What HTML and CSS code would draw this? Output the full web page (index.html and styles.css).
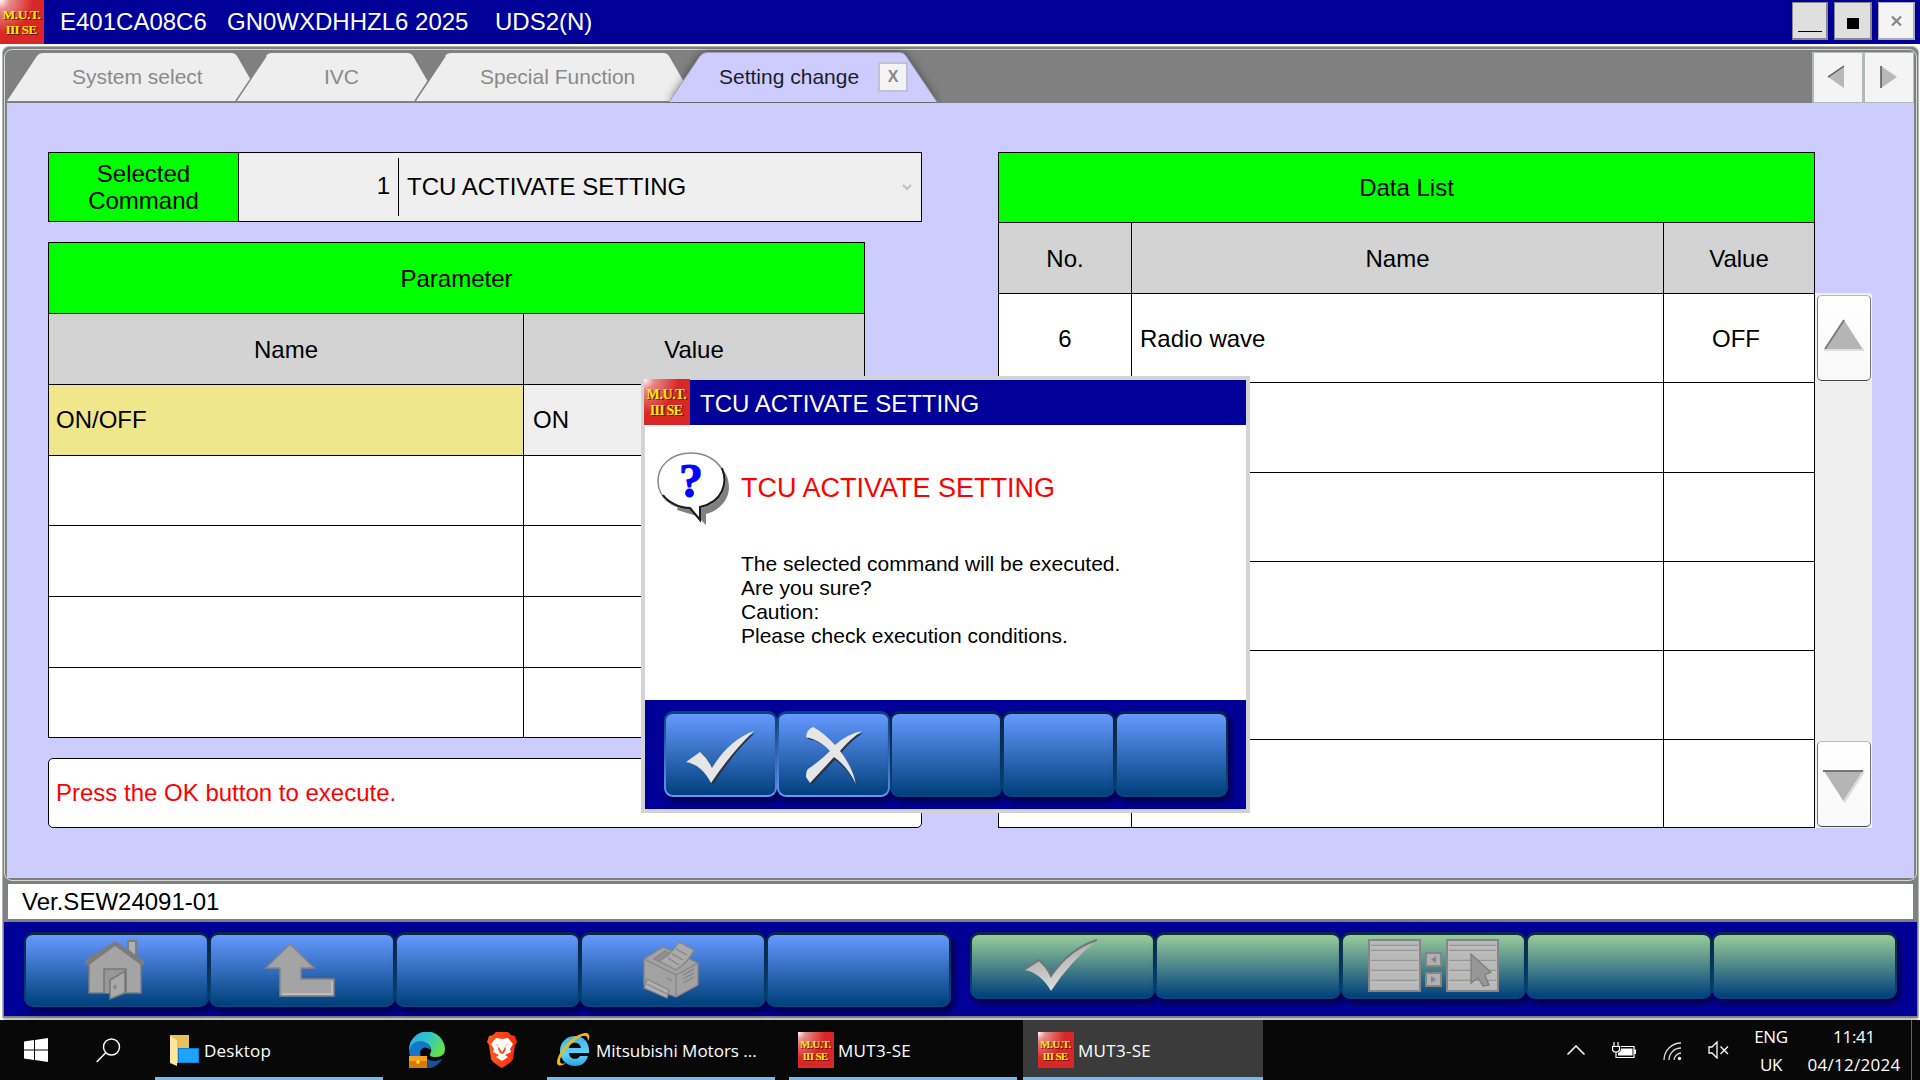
FILE: index.html
```html
<!DOCTYPE html>
<html lang="en">
<head>
<meta charset="utf-8">
<title>MUT3-SE</title>
<link rel="stylesheet" href="styles.css">
</head>
<body>
<svg class="defs" width="0" height="0" aria-hidden="true">
  <defs>
    <radialGradient id="gloss" cx="0" cy="0" r="0.75"><stop offset="0" stop-color="#fff"/><stop offset=".3" stop-color="#e98a8a"/><stop offset="1" stop-color="#d92626"/></radialGradient>
    <linearGradient id="silver" x1="0" y1="0" x2="0.4" y2="1"><stop offset="0" stop-color="#777"/><stop offset=".4" stop-color="#b4b4b4"/><stop offset="1" stop-color="#ddd"/></linearGradient>
    <linearGradient id="edgeA" x1="0" y1="0" x2="1" y2=".5"><stop offset="0" stop-color="#2aa7e8"/><stop offset=".5" stop-color="#2fc4cf"/><stop offset="1" stop-color="#62e04b"/></linearGradient>
    <linearGradient id="ieA" x1="0" y1="0" x2="0" y2="1"><stop offset="0" stop-color="#3fb4ea"/><stop offset=".6" stop-color="#5fd4fb"/><stop offset="1" stop-color="#2ba3e0"/></linearGradient>
    <linearGradient id="braveA" x1="0" y1="0" x2="1" y2="0"><stop offset="0" stop-color="#ff5a1c"/><stop offset="1" stop-color="#fb2a0c"/></linearGradient>
    <symbol id="mut" viewBox="0 0 36 36">
      <rect width="36" height="36" fill="url(#gloss)"/>
      <g font-family="Liberation Serif, serif" font-weight="bold" font-size="11">
        <g fill="#6b1010"><text x="3" y="16.500" textLength="31.500">M.U.T.</text><text x="5.500" y="29" textLength="26">III SE</text></g>
        <g fill="#ffec00"><text x="2" y="15.500" textLength="31.500">M.U.T.</text><text x="4.500" y="28" textLength="26">III SE</text></g>
      </g>
    </symbol>
    <symbol id="list" viewBox="0 0 54 54">
      <rect x="1" y="1" width="51" height="51" fill="#b9b9b9" stroke="#868686" stroke-width="2"/>
      <path d="M3 6.500H50M3 11.500H50M3 21.500H50M3 31.500H50M3 41.500H50" stroke="#979797" stroke-width="1.500"/>
      <path d="M3 8H50M3 13H50M3 23H50M3 33H50M3 43H50" stroke="#c6c6c6"/>
    </symbol>
  </defs>
</svg>

<header class="titlebar">
  <svg class="titlebar-logo"><use href="#mut"/></svg>
  <div class="titlebar-text"><span class="t1">E401CA08C6</span><span class="t2">GN0WXDHHZL6 2025</span><span>UDS2(N)</span></div>
  <div class="winbtns">
    <div class="winbtn w-min"><i class="dash"></i></div>
    <div class="winbtn w-max"><i class="square"></i></div>
    <div class="winbtn w-close"><svg width="11" height="10"><path d="M1 0.500L10 9.500M10 0.500L1 9.500" stroke="#868686" stroke-width="2.200"/></svg></div>
  </div>
</header>

<main class="frame">
  <section class="panel">
    <nav class="tabs">
      <div class="tab tab1"><svg width="256" height="51"><path d="M0 49L30 4Q32 1 36 1H224Q228 1 230 4L256 49Z" fill="#eee"/></svg><span>System select</span></div>
      <div class="tab tab2"><svg width="203" height="51"><path d="M0 49L30 4Q32 1 36 1H171Q175 1 177 4L203 49Z" fill="#eee"/><path d="M0 49L30 4" stroke="#808080" stroke-width="1.500"/></svg><span>IVC</span></div>
      <div class="tab tab3"><svg width="280" height="51"><path d="M0 49L30 4Q32 1 36 1H248Q252 1 254 4L280 49Z" fill="#eee"/><path d="M0 49L30 4" stroke="#808080" stroke-width="1.500"/></svg><span>Special Function</span></div>
      <div class="tab tab4"><svg width="268" height="51"><path d="M0 50L31 4Q34 0.500 38 0.500H231Q235 0.500 237 4L268 50Z" fill="#ccf"/><path d="M0 50L31 4Q34 0.500 38 0.500H231Q235 0.500 237 4L268 50" fill="none" stroke="#9b9bb8"/></svg><span>Setting change</span><b class="tab-x">X</b></div>
      <div class="tabnav">
        <div class="tabnav-btn prev"><svg width="18" height="24"><path d="M17 1V23L1 12Z" fill="#b8b8b8"/><path d="M17 1L1 12" stroke="#555" stroke-width="1.500"/></svg></div>
        <div class="tabnav-btn"><svg width="18" height="24"><path d="M1 1V23L17 12Z" fill="#b8b8b8"/><path d="M1 1V23" stroke="#555" stroke-width="1.500"/></svg></div>
      </div>
    </nav>
    <div class="content">
      <div class="left">
        <div class="command">
          <div class="command-label">Selected<br>Command</div>
          <div class="command-no">1</div>
          <div class="command-name">TCU ACTIVATE SETTING</div>
          <svg class="command-arrow" width="10" height="7"><path d="M1 1L5 5L9 1" fill="none" stroke="#bbb" stroke-width="1.800"/></svg>
        </div>
        <div class="grid param">
          <div class="green wide">Parameter</div>
          <div class="head">Name</div><div class="head">Value</div>
          <div class="name selected">ON/OFF</div><div class="name input">ON</div>
          <div></div><div></div><div></div><div></div>
          <div></div><div></div><div></div><div></div>
        </div>
        <div class="message">Press the OK button to execute.</div>
      </div>
      <div class="grid data">
        <div class="green wide">Data List</div>
        <div class="head">No.</div><div class="head">Name</div><div class="head">Value</div>
        <div class="mid">6</div><div class="name radio">Radio wave</div><div class="mid off">OFF</div>
        <div></div><div></div><div></div><div></div><div></div><div></div>
        <div></div><div></div><div></div><div></div><div></div><div></div>
        <div></div><div></div><div></div>
      </div>
      <div class="scroll">
        <div class="scroll-btn"><svg width="42" height="33"><path d="M21 1L41 32H1Z" fill="#b5b5b5"/><path d="M21 1L2 30" stroke="#777" stroke-width="1.800"/><path d="M1 31H41" stroke="#ddd" stroke-width="2"/></svg></div>
        <div class="scroll-btn low"><svg width="42" height="33"><path d="M1 1H41L21 32Z" fill="#b5b5b5"/><path d="M41 1L21 32" stroke="#ddd" stroke-width="2.500"/><path d="M0 1H40" stroke="#777" stroke-width="2"/></svg></div>
      </div>
    </div>
  </section>
  <div class="version">Ver.SEW24091-01</div>
  <footer class="footer">
    <div class="keys keys-blue">
      <div class="key"><svg class="nudge" width="62" height="62" viewBox="0 0 62 62"><path d="M44 2H52V18L44 11Z" fill="#b0b0b0" stroke="#7c7c7c" stroke-width="1.800"/><path d="M5 23L31 5L57 23V54H5Z" fill="#a4a4a4" stroke="#7c7c7c" stroke-width="1.500"/><path d="M1 25V21L31 2L60 22V26L57 26L31 7L5 26Z" fill="#7c7c7c"/><path d="M20 54V30H42V54" fill="#989898" stroke="#777" stroke-width="1.500"/><path d="M26 60V41L41 32V54Z" fill="#a9a9a9" stroke="#777" stroke-width="1.500"/><path d="M31 45L33 48L31 51L29 48Z" fill="#888"/></svg></div>
      <div class="key"><svg class="nudge" width="70" height="56" viewBox="0 0 70 56"><path d="M25 2L49 26H36V37H69V54H15V26H1Z" fill="#a4a4a4" stroke="#858585" stroke-width="1.500"/><path d="M67 39V52H17" fill="none" stroke="#bdbdbd" stroke-width="2"/></svg></div>
      <div class="key"></div>
      <div class="key"><svg class="nudge" width="56" height="58" viewBox="0 0 56 58" stroke="#858585" stroke-width="1.300" stroke-linejoin="round"><path d="M1 18L20 6L55 22V44L33 56L1 44Z" fill="#a2a2a2"/><path d="M1 18L33 34L55 22M33 34V56" fill="none"/><path d="M11 18L22 10L44 20L33 28Z" fill="#909090"/><path d="M16 20Q28 14 36 1L51 9Q46 20 33 29Z" fill="#aaa"/><path d="M33 8L44 14M29 13L40 19M25 17L36 24" fill="none"/><path d="M4 38L26 49L24 57L1 47Z" fill="#b0b0b0"/><path d="M4 43L24 53M40 34L51 28M40 38L51 32M40 42L51 36M24 37L29 40" fill="none"/></svg></div>
      <div class="key"></div>
    </div>
    <div class="keys keys-green">
      <div class="key"><svg class="check-f" width="76" height="54" viewBox="0 0 76 54"><path d="M1 31L16 21Q24 28 28 37Q46 10 74 1Q46 24 28 52Q17 33 1 31Z" fill="url(#silver)"/><path d="M1 31L16 21Q24 28 28 37Q46 10 74 1" fill="none" stroke="#6f7774" stroke-width="2"/></svg></div>
      <div class="key"></div>
      <div class="key"><svg width="132" height="54" viewBox="0 0 132 54"><use href="#list" width="54" height="54"/><use href="#list" x="78" width="54" height="54"/><g fill="#b0b0b0" stroke="#858585" stroke-width="2"><path d="M58 14H73V27H58ZM58 34H73V47H58Z"/></g><path d="M68 17V24L63 20.500ZM63 37V44L68 40.500Z" fill="#858585"/><path d="M103 15V44L110 39L115 47L121 46L117 36L123 33Z" fill="#969696" stroke="#7c7c7c" stroke-width="1.200"/></svg></div>
      <div class="key"></div>
      <div class="key"></div>
    </div>
  </footer>
</main>

<aside class="dialog">
  <div class="dialog-title"><svg class="dialog-logo"><use href="#mut"/></svg><span>TCU ACTIVATE SETTING</span></div>
  <div class="dialog-body">
    <svg class="ask" width="74" height="74" viewBox="0 0 74 74"><path d="M36 4C55 4 72 16 72 35C72 49 61 59 49 62L49 73L40 64L20 58Z" fill="#808080"/><path d="M34 1C53 1 68 13 68 30C68 45 58 53 43 57V68L34 57C14 56 1 45 1 29C1 13 15 1 34 1Z" fill="#fff" stroke="#888" stroke-width="1.500"/><path d="M65 16C71 31 66 50 43 55V68L33 56C22 56 11 50 6 43" fill="none" stroke="#1a1a1a" stroke-width="2"/><text x="34" y="45" text-anchor="middle" font-family="Liberation Serif, serif" font-weight="bold" font-size="48" fill="#00f" stroke="#00f">?</text></svg>
    <div class="dialog-text">
      <h1>TCU ACTIVATE SETTING</h1>
      <p>The selected command will be executed.<br>Are you sure?<br>Caution:<br>Please check execution conditions.</p>
    </div>
  </div>
  <div class="dialog-keys">
    <div class="key on"><svg class="check-d" width="70" height="58" viewBox="0 0 70 58"><path d="M3 34L17 25Q24 31 28 40Q46 13 70 4Q48 24 28 56Q18 36 3 34Z" fill="#26364a"/><path d="M1 33L15 23Q23 30 27 39Q44 11 69 2Q46 24 26 54Q17 36 1 33Z" fill="#e6e6e6"/></svg></div>
    <div class="key on"><svg class="cross-d" width="60" height="62" viewBox="0 0 60 62"><path d="M5 3Q18 9 31 22Q42 10 58 7Q46 15 36 27Q47 42 53 61Q42 42 30 34Q18 46 7 59L3 54Q3 46 6 45Q18 36 26 26Q16 15 3 13Z" fill="#26364a"/><path d="M8 1Q18 6 30 19Q42 8 57 5Q45 13 35 25Q47 40 51 58Q42 40 29 31Q18 43 5 57L1 51Q1 45 3 43Q15 35 25 25Q15 14 1 11Q2 3 8 1Z" fill="#e6e6e6"/></svg></div>
    <div class="key"></div><div class="key"></div><div class="key"></div>
  </div>
</aside>

<div class="taskbar">
  <div class="tb-start"><svg width="24" height="24"><path d="M0 3.500L10 2V11.500H0ZM11 1.900L24 0V11.500H11ZM0 12.500H10V22L0 20.500ZM11 12.500H24V24L11 22.100Z" fill="#fff"/></svg></div>
  <div class="tb-search"><svg width="25" height="25"><circle cx="15.500" cy="9" r="8" fill="none" stroke="#fff" stroke-width="1.400"/><path d="M9.700 14.800L0.700 24" stroke="#fff" stroke-width="1.500"/></svg></div>
  <div class="tb-app open app-desktop"><svg width="29" height="31"><path d="M0 0H19V28H0Z" fill="#e9bf5a"/><path d="M0 1L7 5V31L0 28Z" fill="#ffe69c"/><path d="M8 13H29V28H8Z" fill="#0a7fd6"/><path d="M9 14H28V27H9Z" fill="#1fa3fb"/></svg><span>Desktop</span></div>
  <div class="tb-app app-edge"><svg width="36" height="36" viewBox="0 0 36 36"><path d="M0 18A18 18 0 0 1 36 17Q36 25 27 25Q20 25 21 22Q24 18 20 13Q12 6 0 18Z" fill="url(#edgeA)"/><path d="M0 18Q3 9 12 9Q21 10 22 18Q14 12 11 20Q11 28 20 31Q27 32 33 27Q27 36 17 36Q1 35 0 18Z" fill="#1477c9"/><path d="M18 27Q25 31 33 27Q28 36 18 36Z" fill="#174f9c"/><rect y="24" width="18" height="12" fill="#d97a06"/><rect y="24" width="18" height="5" fill="#f6a21a"/><rect x="7.500" y="28.500" width="3" height="3" fill="#ffe060"/></svg></div>
  <div class="tb-app app-brave"><svg width="30" height="36" viewBox="0 0 30 36"><path d="M9 0H21L24 3L28 4L30 10L28 13L26 27Q24 31 15 36Q6 31 4 27L2 13L0 10L2 4L6 3Z" fill="url(#braveA)"/><path d="M9 6L15 7L21 6L26 12L23 17L24 20L18 23L21 25L15 29L9 25L12 23L6 20L7 17L4 12Z" fill="#fff"/><path d="M7 12L12 14L11 17L13 21L15 22L17 21L19 17L18 14L23 12L19 13L17 17L15 20L13 17L11 13Z" fill="#fb4a1a"/></svg></div>
  <div class="tb-app open app-ie"><svg width="34" height="36" viewBox="0 0 34 36"><path fill-rule="evenodd" d="M19 4C28 4 34 11 33 21H13C13 27 21 29 24 24H32C30 31 25 34 19 34C10 34 4 27 4 19C4 10 11 4 19 4ZM13 16H25C24 9 14 9 13 16Z" fill="url(#ieA)"/><path d="M6 33C-2 36 0 25 9 14C18 3 31 -2 33 3Q34 6 32 9Q32 3 27 4C20 5 3 22 4 30Q5 33 10 31Q8 33 6 33Z" fill="#f2b914"/></svg><span>Mitsubishi Motors ...</span></div>
  <div class="tb-app open app-mut"><svg width="36" height="36"><use href="#mut"/></svg><span>MUT3-SE</span></div>
  <div class="tb-app open active app-mut2"><svg width="36" height="36"><use href="#mut"/></svg><span>MUT3-SE</span></div>
  <div class="tray">
    <svg width="18" height="10"><path d="M0.500 9.500L9 1L17.500 9.500" fill="none" stroke="#fff" stroke-width="1.500"/></svg>
    <svg class="tr-bat" width="24" height="17"><path d="M2 0V4M6 0V4M0.500 4.500H7.500V8Q7 10 4 10Q1 10 0.500 8ZM4 10V15.500H22V4.500H9" fill="none" stroke="#fff" stroke-width="1.200"/><path d="M9 6.500H20.500V13.500H6V11Q9 10 9 6.500ZM22 7.500H24V12H22Z" fill="#fff"/></svg>
    <svg class="tr-wifi" width="19" height="19"><g fill="none" stroke="#ddd" stroke-width="1.300"><path d="M1 18A17 17 0 0 1 18 1M6 18A12 12 0 0 1 18 6M11 18A7.500 7.500 0 0 1 18 11"/></g><circle cx="16.500" cy="16.500" r="1.700" fill="#fff"/></svg>
    <svg class="tr-snd" width="21" height="18"><path d="M1 6H4L9 1V17L4 12H1ZM12.500 5.500L20 13M20 5.500L12.500 13" fill="none" stroke="#fff" stroke-width="1.300"/></svg>
    <div class="lang">ENG<br>UK</div>
    <div class="clock">11:41<br><span>04/12/2024</span></div>
    <i class="peek"></i>
  </div>
</div>
</body>
</html>
```
FILE: styles.css
```css
* { box-sizing: border-box; }
body {
  margin: 0;
  width: 1920px;
  height: 1080px;
  overflow: hidden;
  display: flex;
  flex-direction: column;
  background: #fff;
  color: #000;
  font: 24px/27px "Liberation Sans", Arial, sans-serif;
  position: relative;
}
svg { display: block; flex: none; }
.defs { position: absolute; }

/* Title bar */
.titlebar { height: 44px; flex: none; display: flex; background: #000099; color: #fff; }
.titlebar-logo { width: 44px; height: 44px; }
.titlebar-text { flex: 1; padding: 8px 0 0 16px; white-space: nowrap; }
.titlebar-text span { display: inline-block; }
.t1 { width: 167px; }
.t2 { width: 268px; }
.winbtns { display: flex; padding: 2px 5px 0 0; }
.winbtn { height: 38px; border: 1px solid #888; border-width: 1px 2px 2px 1px; background: #dfdfdf; display: flex; align-items: center; justify-content: center; }
.w-min { width: 36px; margin-right: 6px; }
.w-max { width: 38px; margin-right: 6px; }
.w-close { width: 37px; background: #f4f4f4; border-color: #aab; }
.dash { width: 24px; height: 1px; background: #000; margin-top: 22px; }
.square { width: 12px; height: 11px; background: #000; margin-top: 6px; }

/* Application frame */
.frame {
  flex: none;
  height: 974px;
  margin: 2px 1px 0 2px;
  display: flex;
  flex-direction: column;
  background: #808080;
  border: 1px solid #b4b8b4;
  border-bottom: 2px solid #c4c8c4;
  border-radius: 7px 7px 4px 4px;
}
.panel { height: 832px; margin: 2px 1px 0; padding: 2px; border: 1px solid #d4d8d4; border-radius: 8px; }
.tabs { height: 51px; display: flex; background: #808080; }
.tab { position: relative; height: 51px; color: #8a8a8a; font-size: 21px; line-height: 50px; flex: none; }
.tab svg { position: absolute; left: 0; top: 0; overflow: visible; }
.tab span { position: relative; white-space: nowrap; }
.tab1 { width: 256px; padding-left: 65px; }
.tab2 { width: 203px; padding-left: 88px; margin-left: -27px; }
.tab3 { width: 280px; padding-left: 65px; margin-left: -24px; }
.tab4 { width: 268px; padding-left: 50px; margin-left: -26px; color: #1c1c2c; display: flex; }
.tab4 svg { filter: drop-shadow(0 0 4px rgba(0, 0, 0, .45)); clip-path: inset(-4px -14px 0 -14px); }
.tab-x { position: relative; width: 30px; height: 30px; margin: 10px 0 0 19px; border: 2px solid #bfc0d2; background: #f3f3f3; color: #888; font: bold 16px/25px "Liberation Sans", Arial, sans-serif; text-align: center; }
.tabnav { margin-left: auto; display: flex; }
.tabnav-btn { width: 51px; height: 51px; display: flex; align-items: center; justify-content: center; background: #f4f4f4; border: 2px solid #b4b8b8; border-width: 1px 1px 1px 2px; padding-bottom: 2px; }
.tabnav-btn.prev { padding-right: 4px; }

.content { height: 775px; background: #ccccff; display: flex; padding: 49px 0 0 41px; }
.left { width: 874px; margin-right: 76px; }
.command { height: 70px; display: flex; align-items: center; border: 1px solid #000; background: #efefef; }
.command-label { width: 190px; height: 68px; padding-top: 7px; text-align: center; background: #0f0; border-right: 1px solid #000; }
.command-no { width: 160px; height: 58px; line-height: 56px; padding-right: 8px; text-align: right; border-right: 1px solid #000; }
.command-name { flex: 1; padding: 0 0 1px 8px; }
.command-arrow { margin-right: 9px; }
.grid { display: grid; gap: 1px; padding: 1px; background: #000; align-content: start; }
.grid > div { background: #fff; display: flex; align-items: center; }
.grid > .wide { grid-column: 1 / -1; }
.grid > .green, .grid > .head, .grid > .mid { justify-content: center; }
.grid > .green { background: #0f0; }
.grid > .head { background: #d3d3d3; }
.grid > .name { padding: 0 7px 2px; }
.grid > .radio { padding: 0 8px; }
.grid > .off { padding-right: 6px; }
.grid > .selected { background: #f0e68c; }
.grid > .input { background: #efefef; padding-left: 9px; }
.param { width: 817px; margin-top: 20px; grid-template-columns: 474px 340px; grid-template-rows: 70px 70px 70px 69px 70px 70px 69px; }
.message { margin-top: 20px; height: 70px; padding: 20px 0 0 7px; border: 1px solid #000; border-radius: 5px; background: #fff; color: #f00; }
.data { width: 817px; height: 676px; grid-template-columns: 132px 531px 150px; grid-template-rows: 69px 70px 88px 89px 88px 88px 88px 87px; }
.scroll { width: 57px; height: 535px; margin-top: 141px; padding: 2px 1px 1px 2px; background: #efefef; display: flex; flex-direction: column; justify-content: space-between; border-radius: 0 3px 0 0; }
.scroll-btn { height: 86px; border: 1px solid #999; border-color: #bbb #777 #444; border-radius: 5px; background: linear-gradient(#fff, #f8f8f8); display: flex; justify-content: center; padding-top: 23px; }
.scroll-btn.low { padding-top: 28px; }

.version { height: 35px; margin: 3px 5px; padding: 4px 0 0 14px; background: #fff; }

/* Function keys */
.footer { height: 94px; margin: 0 1px; display: flex; background: #000099; padding: 10px 0 0 20px; }
.keys { width: 927px; height: 75px; display: flex; }
.keys-green { height: 67px; margin-left: 19px; }
.key {
  flex: 1 1 0;
  display: flex;
  align-items: center;
  justify-content: center;
  border: 2px solid transparent;
  border-top-width: 3px;
  border-radius: 9px;
  background: linear-gradient(#6699ff, #00407c) padding-box, linear-gradient(#0b2440, #083a66 60%, #05467e) border-box;
  box-shadow: 3px 5px 6px rgba(0, 0, 40, .75);
}
.keys-green .key { background: linear-gradient(#99cc99, #00407c) padding-box, linear-gradient(#0b2a40, #083a66 60%, #05467e) border-box; }
.key.on { background: linear-gradient(#6699ff, #00407c) padding-box, linear-gradient(#08407c, #6699ff) border-box; }
.nudge { margin-right: 4px; }
.check-f { margin-right: 3px; }

/* Confirmation dialog, floating above the screen */
.dialog { position: absolute; left: 641px; top: 376px; width: 609px; height: 437px; border: 4px solid #d3d3d3; background: #fff; display: flex; flex-direction: column; }
.dialog-title { height: 45px; background: #000099; color: #fff; display: flex; }
.dialog-title span { padding: 10px 0 0 9px; }
.dialog-logo { width: 46px; height: 46px; margin: -1px 0 0 -1px; }
.dialog-title span { padding-left: 10px; }
.dialog-body { height: 275px; display: flex; padding: 27px 0 0 12px; }
.dialog-text { padding: 21px 0 0 10px; }
.dialog h1 { margin: 0; font-size: 27px; line-height: 31px; font-weight: normal; color: #f00; }
.dialog p { margin: 48px 0 0; font-size: 21px; line-height: 24px; }
.dialog-keys { flex: 1; background: #000099; display: flex; padding: 11px 18px 12px 19px; }
.check-d { margin: 6px 0 0 0; }
.cross-d { margin: 4px 0 0 3px; }

/* Windows taskbar */
.taskbar { height: 60px; flex: none; background: #080808; color: #fff; display: flex; font: 17px/28px "Open Sans", "Noto Sans", sans-serif; }
.tb-start { padding: 18px 0 0 24px; }
.tb-search { padding: 18px 0 0 48px; }
.tb-app { height: 60px; display: flex; align-items: center; flex: none; white-space: nowrap; }
.tb-app span { padding-top: 1px; }
.open { border-bottom: 3px solid #76b9ed; padding-top: 3px; }
.app-desktop { width: 228px; margin-left: 34px; padding-left: 15px; gap: 5px; letter-spacing: .2px; }
.app-edge { margin-left: 26px; }
.app-brave { margin-left: 42px; }
.app-ie { width: 228px; margin-left: 30px; padding-left: 9px; gap: 6px; letter-spacing: 0; }
.app-mut { width: 228px; margin-left: 14px; padding-left: 9px; gap: 4px; letter-spacing: .3px; }
.app-mut2 { width: 240px; margin-left: 6px; padding-left: 15px; gap: 4px; letter-spacing: .3px; }
.active { background: #3b3b3b; }
.tray { flex: 1; display: flex; align-items: center; padding-left: 304px; }
.tr-bat { margin-left: 27px; }
.tr-wifi { margin-left: 27px; margin-top: 3px; }
.tr-snd { margin-left: 26px; }
.lang { width: 60px; margin-left: 12px; text-align: center; padding-top: 2px; letter-spacing: -.3px; }
.clock { width: 104px; margin-left: 1px; text-align: center; padding-top: 1px; letter-spacing: -.3px; white-space: nowrap; }
.clock span { letter-spacing: .3px; }
.peek { width: 1px; height: 60px; background: #666; margin-left: 5px; }
```
